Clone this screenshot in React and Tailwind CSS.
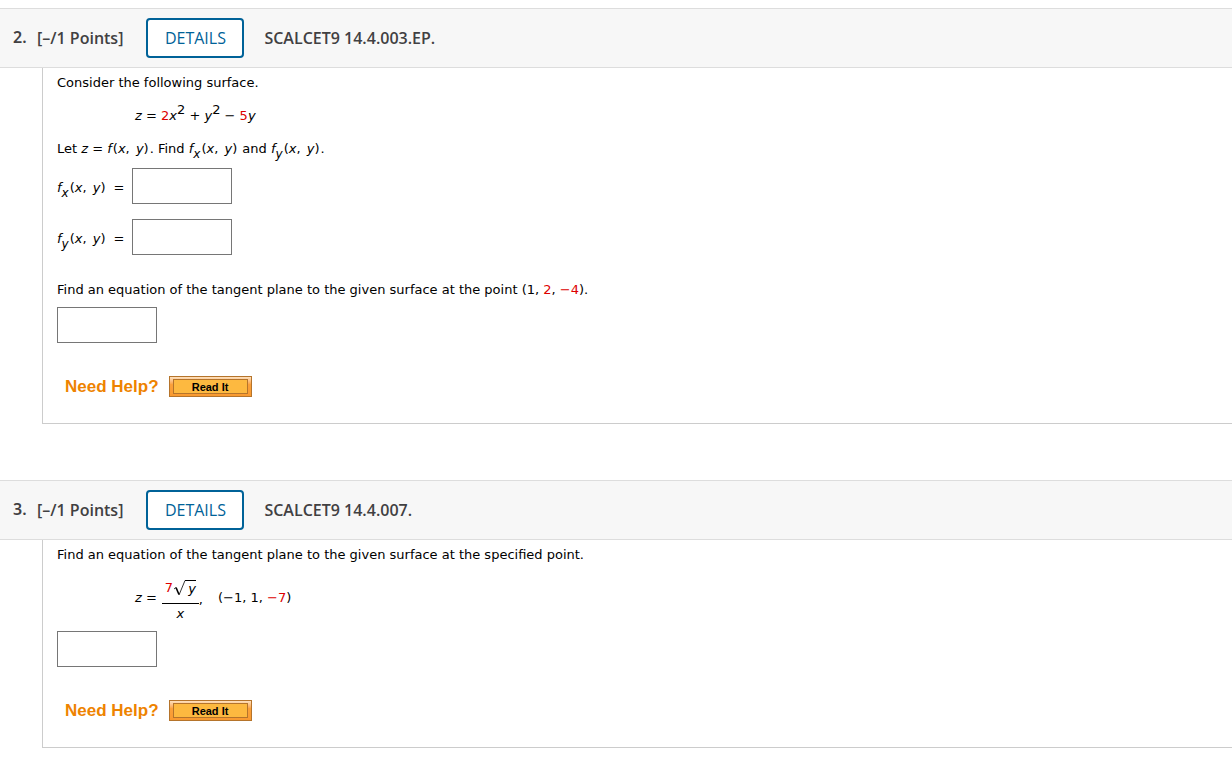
const Var = ({ children }) => <i className="italic">{children}</i>;

const Rand = ({ children }) => (
  <span className="text-[#dd0000]">{children}</span>
);

const Args = () => (
  <span className="mr-px ml-px whitespace-nowrap">
    (<Var>x</Var>, <i className="ml-0.5 italic">y</i>)
  </span>
);

const Partial = ({ name }) => (
  <span className="whitespace-nowrap">
    <Var>f</Var>
    <sub className="-bottom-[5px] text-xs leading-none italic">{name}</sub>
    <Args />
  </span>
);

const AnswerBox = ({ id, label }) => (
  <input
    id={id}
    type="text"
    aria-label={label}
    className="block h-9 w-[100px] border border-[#767676] bg-white px-2"
  />
);

const PartialRow = ({ id, name }) => (
  <div className="flex items-center gap-2">
    <label htmlFor={id} className="pt-1">
      <Partial name={name} />
      <span className="ml-[7px]">=</span>
    </label>
    <AnswerBox id={id} />
  </div>
);

const NeedHelp = () => (
  <div className="mt-[33px] ml-2 flex items-center gap-2.5 font-['Liberation_Sans',Arial,sans-serif]">
    <span className="text-[17px] leading-5 font-bold text-[#ee8300]">
      Need Help?
    </span>
    <button
      type="button"
      className="h-[21px] w-[83px] border border-[#b5742b] bg-linear-to-b from-[#fde0bd] via-[#fba03a] via-40% to-[#f99a30] px-[3px] py-[2px] text-[11px] font-bold text-black"
    >
      <span className="flex h-full items-center justify-center border border-[#b5742b] bg-[#fdb940] pt-px leading-none">
        Read It
      </span>
    </button>
  </div>
);

const Question = ({ number, code, children }) => (
  <section className="mb-14 last:mb-0">
    <header className="flex h-[60px] items-center border-y border-[#dddddd] bg-[#f7f7f7] pl-[13px] font-['Open_Sans',sans-serif] text-base font-semibold text-[#414042]">
      <span className="w-6 pb-0.5 font-['Noto_Sans',sans-serif]">
        {number}.
      </span>
      <span>[–/1 Points]</span>
      <button
        type="button"
        className="ml-[23px] h-10 w-[98px] rounded border-2 border-[#006298] bg-white font-normal text-[#006298]"
      >
        DETAILS
      </button>
      <h2 className="ml-5">{code}</h2>
    </header>
    <div className="ml-[42px] border-b border-l border-[#cccccc] pt-[5px] pb-[26px] pl-[14px] font-['DejaVu_Sans',Verdana,sans-serif] text-[13px] leading-5 text-black">
      {children}
    </div>
  </section>
);

const App = () => (
  <main className="bg-white pt-2">
    <Question number={2} code="SCALCET9 14.4.003.EP.">
      <p>Consider the following surface.</p>
      <p className="mt-[13px] ml-[78px]">
        <Var>z</Var> = <Rand>2</Rand>
        <Var>x</Var>
        <sup className="text-[13px]">2</sup> + <Var>y</Var>
        <sup className="text-[13px]">2</sup> − <Rand>5</Rand>
        <Var>y</Var>
      </p>
      <p className="mt-[13px]">
        Let <Var>z</Var> = <Var>f</Var>
        <Args />. Find <Partial name="x" /> and <Partial name="y" />.
      </p>
      <div className="mt-[9px] flex flex-col gap-[15px]">
        <PartialRow id="fx" name="x" />
        <PartialRow id="fy" name="y" />
      </div>
      <p className="mt-[25px] mb-[7px]">
        Find an equation of the tangent plane to the given surface at the point
        (1, <Rand>2</Rand>, <Rand>−4</Rand>).
      </p>
      <AnswerBox id="plane-2" label="Tangent plane equation" />
      <NeedHelp />
    </Question>

    <Question number={3} code="SCALCET9 14.4.007.">
      <p>
        Find an equation of the tangent plane to the given surface at the
        specified point.
      </p>
      <div className="mt-[11px] mb-[7px] ml-[78px] flex items-center">
        <span className="mr-[5px] pb-1">
          <Var>z</Var> =
        </span>
        <span className="flex w-[37px] flex-col items-center">
          <span className="flex h-7 w-full items-center border-b border-black pl-[3px]">
            <span className="pb-1">
              <Rand>7</Rand>
            </span>
            <svg
              viewBox="0 0 24 20"
              className="h-5 w-6 shrink-0"
              fill="none"
              stroke="#000"
              aria-hidden="true"
            >
              <path d="M1 9l2-1.5" strokeWidth="0.8" />
              <path d="M3 7.5l3 7" strokeWidth="1.6" />
              <path d="M6 15L12 0.5" strokeWidth="0.8" />
              <path d="M12 0.5h11" />
            </svg>
            <span className="-ml-[9px] pb-0.5">
              <Var>y</Var>
            </span>
          </span>
          <Var>x</Var>
        </span>
        <span>,</span>
        <span className="ml-[15px] pb-1">
          (−1, 1, <Rand>−7</Rand>)
        </span>
      </div>
      <AnswerBox id="plane-3" label="Tangent plane equation" />
      <NeedHelp />
    </Question>
  </main>
);

export default App;
